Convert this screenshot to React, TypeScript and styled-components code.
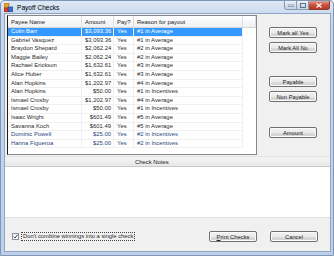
import React from "react";
import styled, { createGlobalStyle } from "styled-components";

const Global = createGlobalStyle`
  html, body { margin: 0; padding: 0; background: #ffffff; }
  body { font-family: "Liberation Sans", Arial, sans-serif; }
  * { box-sizing: border-box; }
`;

const Window = styled.div`
  width: 334px;
  height: 256px;
  display: flex;
  flex-direction: column;
  background: linear-gradient(#dfe9f6 0px, #c8d9ee 14px, #bcd0e9 100%);
  border: 1px solid #7e97b8;
  border-radius: 4px 4px 0 0;
  overflow: hidden;
`;

const TitleBar = styled.div`
  height: 12px;
  display: flex;
  align-items: center;
  padding-left: 3px;
`;

const Title = styled.span`
  font-size: 6.6px;
  color: #000;
  margin-left: 4px;
  margin-top: 1px;
`;

const Captions = styled.div`
  margin-left: auto;
  margin-right: 3px;
  align-self: flex-start;
  display: flex;
  height: 9px;
`;

const CapBtn = styled.div<{ $close?: boolean; $w: number }>`
  width: ${(p) => p.$w}px;
  height: 9px;
  display: flex;
  align-items: center;
  justify-content: center;
  border: 1px solid ${(p) => (p.$close ? "#8e3a2e" : "#8a9bb2")};
  border-top: none;
  background: ${(p) =>
    p.$close
      ? "linear-gradient(#e0a398, #c9503c 50%, #b43c26)"
      : "linear-gradient(#eef3fa, #d3deed 50%, #c5d3e6)"};
  &:first-child { border-bottom-left-radius: 3px; }
  &:last-child { border-bottom-right-radius: 3px; }
  & + & { border-left: none; }
`;

const Client = styled.div`
  flex: 1;
  margin: 0 2px 3px 3px;
  background: #f0f0f0;
  display: flex;
  flex-direction: column;
  border: 1px solid #8fa5c2;
`;

const TopArea = styled.div`
  height: 142px;
  display: flex;
`;

const ListView = styled.div`
  width: 250px;
  height: 140px;
  margin: 1px 0 0 2px;
  background: #fff;
  border: 1px solid #828790;
  border-left: 1px solid #1e1e1e;
  display: flex;
  flex-direction: column;
  overflow: hidden;
`;

const COLS = "74px 32px 20px 109px";

const HeaderRow = styled.div`
  display: grid;
  grid-template-columns: ${COLS} 1fr;
  height: 12px;
  background: linear-gradient(#ffffff, #f6f7f8 50%, #eef0f3);
  border-bottom: 1px solid #d5d5d5;
`;

const HeaderCell = styled.div`
  font-size: 5.9px;
  color: #1a1a1a;
  display: flex;
  align-items: center;
  padding-left: 3px;
  border-right: 1px solid #dcdfe3;
`;

const Row = styled.div<{ $sel?: boolean; $blue?: boolean }>`
  display: grid;
  grid-template-columns: ${COLS};
  height: 8.6px;
  background: ${(p) => (p.$sel ? "#3399ff" : "#fff")};
  color: ${(p) => (p.$sel ? "#fff" : p.$blue ? "#2b3f7c" : "#2a2a2a")};
  border-bottom: 1px solid #f0f0f0;
  width: 235px;
`;

const Cell = styled.div<{ $right?: boolean }>`
  font-size: 5.9px;
  line-height: 7.6px;
  white-space: nowrap;
  overflow: hidden;
  padding: 0 2px 0 3px;
  text-align: ${(p) => (p.$right ? "right" : "left")};
  border-right: 1px solid #f0f0f0;
`;

const ButtonColumn = styled.div`
  flex: 1;
  display: flex;
  flex-direction: column;
  align-items: flex-start;
  padding: 13px 0 0 12px;
`;

const Button = styled.button<{ $gap?: number }>`
  width: 48px;
  height: 11px;
  margin-top: ${(p) => p.$gap ?? 0}px;
  padding: 0;
  font-family: "Liberation Sans", Arial, sans-serif;
  font-size: 5.8px;
  color: #222;
  border: 1px solid #707070;
  border-radius: 2px;
  background: linear-gradient(#f2f2f2, #ebebeb 50%, #dddddd 51%, #cfcfcf);
  box-shadow: inset 0 0 0 1px #fbfbfb;
  display: flex;
  align-items: center;
  justify-content: center;
  u { text-decoration: underline; }
`;

const NotesHeader = styled.div`
  height: 11px;
  display: flex;
  align-items: center;
  padding-left: 130px;
  font-size: 5.9px;
  color: #222;
  background: linear-gradient(#f4f4f4, #e8e8e8);
  border-top: 1px solid #e2e2e2;
  border-bottom: 1px solid #c9c9c9;
`;

const NotesBox = styled.div`
  height: 51px;
  background: #fff;
  border-bottom: 1px solid #e0e0e0;
`;

const BottomBar = styled.div`
  flex: 1;
  display: flex;
  align-items: flex-start;
  padding: 13px 0 0 7px;
`;

const CheckWrap = styled.label`
  display: flex;
  align-items: center;
  margin-top: 1px;
`;

const CheckBox = styled.span`
  width: 7px;
  height: 7px;
  border: 1px solid #8e8f8f;
  background: linear-gradient(#f3f3f3, #ffffff);
  display: flex;
  align-items: center;
  justify-content: center;
`;

const CheckLabel = styled.span`
  font-size: 5.8px;
  color: #2a2a2a;
  margin-left: 2px;
  padding: 0 1px;
  border: 1px dotted #444;
  line-height: 7px;
`;

const BottomButtons = styled.div`
  margin-left: auto;
  margin-right: 12px;
  display: flex;
  gap: 13px;
`;

type R = [string, string, string, string];
const rows: R[] = [
  ["Colin Barr", "$3,093.36", "Yes", "#1 in Average"],
  ["Gabriel Vasquez", "$3,093.36", "Yes", "#1 in Average"],
  ["Braydon Shepard", "$2,062.24", "Yes", "#2 in Average"],
  ["Maggie Bailey", "$2,062.24", "Yes", "#2 in Average"],
  ["Rachael Erickson", "$1,632.61", "Yes", "#3 in Average"],
  ["Alice Huber", "$1,632.61", "Yes", "#3 in Average"],
  ["Alan Hopkins", "$1,202.97", "Yes", "#4 in Average"],
  ["Alan Hopkins", "$50.00", "Yes", "#1 in Incentives"],
  ["Ismael Crosby", "$1,202.97", "Yes", "#4 in Average"],
  ["Ismael Crosby", "$50.00", "Yes", "#1 in Incentives"],
  ["Isaac Wright", "$601.49", "Yes", "#5 in Average"],
  ["Savanna Koch", "$601.49", "Yes", "#5 in Average"],
  ["Dominic Powell", "$25.00", "Yes", "#2 in Incentives"],
  ["Hanna Figueroa", "$25.00", "Yes", "#2 in Incentives"],
];

const AppIcon = () => (
  <svg width="9" height="9" viewBox="0 0 9 9">
    <rect x="0" y="0" width="5" height="5" fill="#e8a03a" stroke="#a05a10" strokeWidth="0.6" />
    <rect x="4" y="4" width="5" height="5" fill="#3b6fd0" stroke="#1d3f87" strokeWidth="0.6" />
    <rect x="0" y="5" width="4" height="4" fill="#d8403a" stroke="#8a1f1a" strokeWidth="0.6" />
  </svg>
);

export default function App() {
  return (
    <>
      <Global />
      <Window>
        <TitleBar>
          <AppIcon />
          <Title>Payoff Checks</Title>
          <Captions>
            <CapBtn $w={13}>
              <svg width="6" height="3" viewBox="0 0 6 3">
                <rect x="0" y="1" width="6" height="1.5" fill="#fff" stroke="#46586f" strokeWidth="0.5" />
              </svg>
            </CapBtn>
            <CapBtn $w={12}>
              <svg width="6" height="5" viewBox="0 0 6 5">
                <rect x="0.5" y="0.5" width="5" height="4" fill="none" stroke="#46586f" strokeWidth="0.8" />
              </svg>
            </CapBtn>
            <CapBtn $close $w={21}>
              <svg width="6" height="5" viewBox="0 0 6 5">
                <path d="M0.5 0.5 L5.5 4.5 M5.5 0.5 L0.5 4.5" stroke="#fff" strokeWidth="1.2" />
              </svg>
            </CapBtn>
          </Captions>
        </TitleBar>
        <Client>
          <TopArea>
            <ListView>
              <HeaderRow>
                <HeaderCell>Payee Name</HeaderCell>
                <HeaderCell>Amount</HeaderCell>
                <HeaderCell>Pay?</HeaderCell>
                <HeaderCell>Reason for payout</HeaderCell>
                <HeaderCell />
              </HeaderRow>
              {rows.map((r, i) => (
                <Row key={i} $sel={i === 0} $blue={i >= 12}>
                  <Cell>{r[0]}</Cell>
                  <Cell $right>{r[1]}</Cell>
                  <Cell>{r[2]}</Cell>
                  <Cell>{r[3]}</Cell>
                </Row>
              ))}
            </ListView>
            <ButtonColumn>
              <Button>Mark all Yes</Button>
              <Button $gap={4}>Mark All No</Button>
              <Button $gap={23}>Payable</Button>
              <Button $gap={4}>Non Payable</Button>
              <Button $gap={25}>Amount</Button>
            </ButtonColumn>
          </TopArea>
          <NotesHeader>Check Notes</NotesHeader>
          <NotesBox />
          <BottomBar>
            <CheckWrap>
              <CheckBox>
                <svg width="5" height="5" viewBox="0 0 5 5">
                  <path d="M0.6 2.6 L2 4 L4.5 0.8" fill="none" stroke="#1b3a8a" strokeWidth="1" />
                </svg>
              </CheckBox>
              <CheckLabel>Don't combine winnings into a single check</CheckLabel>
            </CheckWrap>
            <BottomButtons>
              <Button>
                <span><u>P</u>rint Checks</span>
              </Button>
              <Button>Cancel</Button>
            </BottomButtons>
          </BottomBar>
        </Client>
      </Window>
    </>
  );
}
